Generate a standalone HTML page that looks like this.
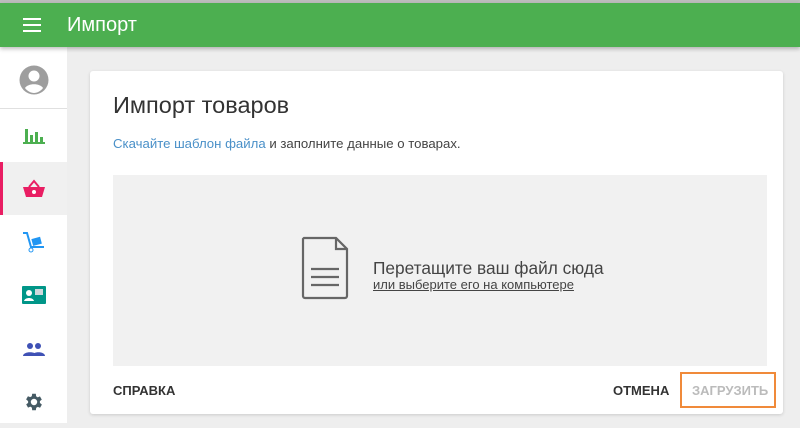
<!DOCTYPE html><html><head><meta charset="utf-8"><style>
*{margin:0;padding:0;box-sizing:border-box}
body{width:800px;height:423px;overflow:hidden;background:#eeeeee;font-family:"Liberation Sans",sans-serif;position:relative}
.top{position:absolute;left:0;top:0;width:800px;height:3px;background:#bdbdbd}
.hdr{position:absolute;left:0;top:3px;width:800px;height:44px;background:#4caf50;box-shadow:0 2px 4px rgba(0,0,0,.25);z-index:2}
.hdr .t{position:absolute;left:67px;top:11px;color:#fff;font-size:20px}
.side{position:absolute;left:0;top:47px;width:67px;height:376px;background:#fff}
.it{position:absolute;left:0;width:67px;height:53px;display:flex;align-items:center;justify-content:center}
.card{position:absolute;left:90px;top:71px;width:693px;height:343px;background:#fff;border-radius:3px;box-shadow:0 1px 3px rgba(0,0,0,.15)}
.drop{position:absolute;left:23px;top:104px;width:654px;height:191px;background:#f1f1f1}
</style></head><body>
<div class="top"></div>
<div class="hdr">
<svg style="position:absolute;left:23px;top:15px" width="18" height="14"><rect y="0" width="18" height="2" fill="#fff"/><rect y="6" width="18" height="2" fill="#fff"/><rect y="12" width="18" height="2" fill="#fff"/></svg>
<div class="t">Импорт</div></div>
<div class="side">
<div class="it" style="top:4px;height:57px"><svg width="30" height="30" viewBox="0 0 30 30"><circle cx="15" cy="15" r="14.5" fill="#9e9e9e"/><circle cx="15" cy="11" r="5.5" fill="#fff"/><path d="M6 23c3-5 15-5 18 0c-2 3-6 5-9 5s-7-2-9-5z" fill="#fff"/></svg></div>
<div style="position:absolute;left:0;top:61px;width:67px;height:1px;background:#e0e0e0"></div>
<div class="it" style="top:62px"><svg width="22" height="18"><rect x="2" y="2" width="3" height="14" fill="#4caf50"/><rect x="7" y="8" width="3" height="8" fill="#4caf50"/><rect x="12" y="5" width="3" height="11" fill="#4caf50"/><rect x="17" y="10" width="3" height="6" fill="#4caf50"/><rect x="0" y="15" width="22" height="2" fill="#4caf50"/></svg></div>
<div class="it" style="top:115px;background:#f0f0f0"><div style="position:absolute;left:0;top:0;width:3px;height:53px;background:#e91e63"></div><svg width="22" height="20"><path d="M6 8L11 2L16 8" stroke="#e91e63" stroke-width="2" fill="none"/><path d="M0 8h22l-3 10H3z" fill="#e91e63"/><circle cx="11" cy="13" r="2" fill="#fff"/></svg></div>
<div class="it" style="top:168px"><svg width="24" height="22"><path d="M1 2h4l4 14h13" stroke="#2196f3" stroke-width="2" fill="none"/><rect x="10" y="7" width="9" height="7" fill="#2196f3" transform="rotate(-15 14 10)"/><circle cx="9" cy="19" r="2" stroke="#2196f3" fill="none"/></svg></div>
<div class="it" style="top:221px"><svg width="24" height="18"><rect width="24" height="18" rx="1" fill="#009688"/><circle cx="7" cy="7" r="3" fill="#fff"/><path d="M2 15c1-4 9-4 10 0z" fill="#fff"/><rect x="13" y="3" width="8" height="6" fill="#cfd8dc"/></svg></div>
<div class="it" style="top:275px"><svg width="22" height="14"><circle cx="7" cy="4" r="3" fill="#3f51b5"/><circle cx="15" cy="4" r="3" fill="#3f51b5"/><path d="M0 14c0-5 14-5 14 0z" fill="#3f51b5"/><path d="M9 14c0-5 13-5 13 0z" fill="#3f51b5"/></svg></div>
<div class="it" style="top:328px"><svg width="22" height="22" viewBox="0 0 24 24"><path fill="#455a64" d="M19.4 13a7.5 7.5 0 0 0 0-2l2.1-1.6-2-3.5-2.5 1a7 7 0 0 0-1.7-1L15 3h-4l-.4 2.7a7 7 0 0 0-1.7 1l-2.5-1-2 3.5L6.6 11a7.5 7.5 0 0 0 0 2l-2.1 1.6 2 3.5 2.5-1a7 7 0 0 0 1.7 1L11 21h4l.4-2.7a7 7 0 0 0 1.7-1l2.5 1 2-3.5zM13 15.5a3.5 3.5 0 1 1 0-7 3.5 3.5 0 0 1 0 7z" transform="translate(-1 0)"/></svg></div>
</div>
<div class="card">
<div style="position:absolute;left:23px;top:21px;font-size:23.5px;color:#333">Импорт товаров</div>
<div style="position:absolute;left:23px;top:65px;font-size:13.2px;color:#444"><span style="color:#4a90c8">Скачайте шаблон файла</span> и заполните данные о товарах.</div>
<div class="drop">
<svg style="position:absolute;left:188px;top:61px" width="48" height="64" viewBox="0 0 48 64"><path d="M3 2h32l11 11v47a2 2 0 0 1-2 2H4a2 2 0 0 1-2-2V3z" fill="none" stroke="#666" stroke-width="2.2"/><path d="M35 2v11h11" fill="none" stroke="#666" stroke-width="2.2"/><path d="M10 33h28M10 41h28M10 49h28" stroke="#666" stroke-width="2.2"/></svg>
<div style="position:absolute;left:260px;top:83px;font-size:17.3px;color:#444">Перетащите ваш файл сюда</div>
<div style="position:absolute;left:260px;top:102px;font-size:13px;color:#444;text-decoration:underline">или выберите его на компьютере</div>
</div>
<div style="position:absolute;left:23px;top:312px;font-size:13px;color:#333;font-weight:bold">СПРАВКА</div>
<div style="position:absolute;left:523px;top:312px;font-size:13px;color:#333;font-weight:bold">ОТМЕНА</div>
<div style="position:absolute;left:590px;top:301px;width:96px;height:36px;border:2px solid #f08a3a"></div>
<div style="position:absolute;left:602px;top:312px;font-size:13px;color:#bbb;font-weight:bold">ЗАГРУЗИТЬ</div>
</div>
</body></html>
